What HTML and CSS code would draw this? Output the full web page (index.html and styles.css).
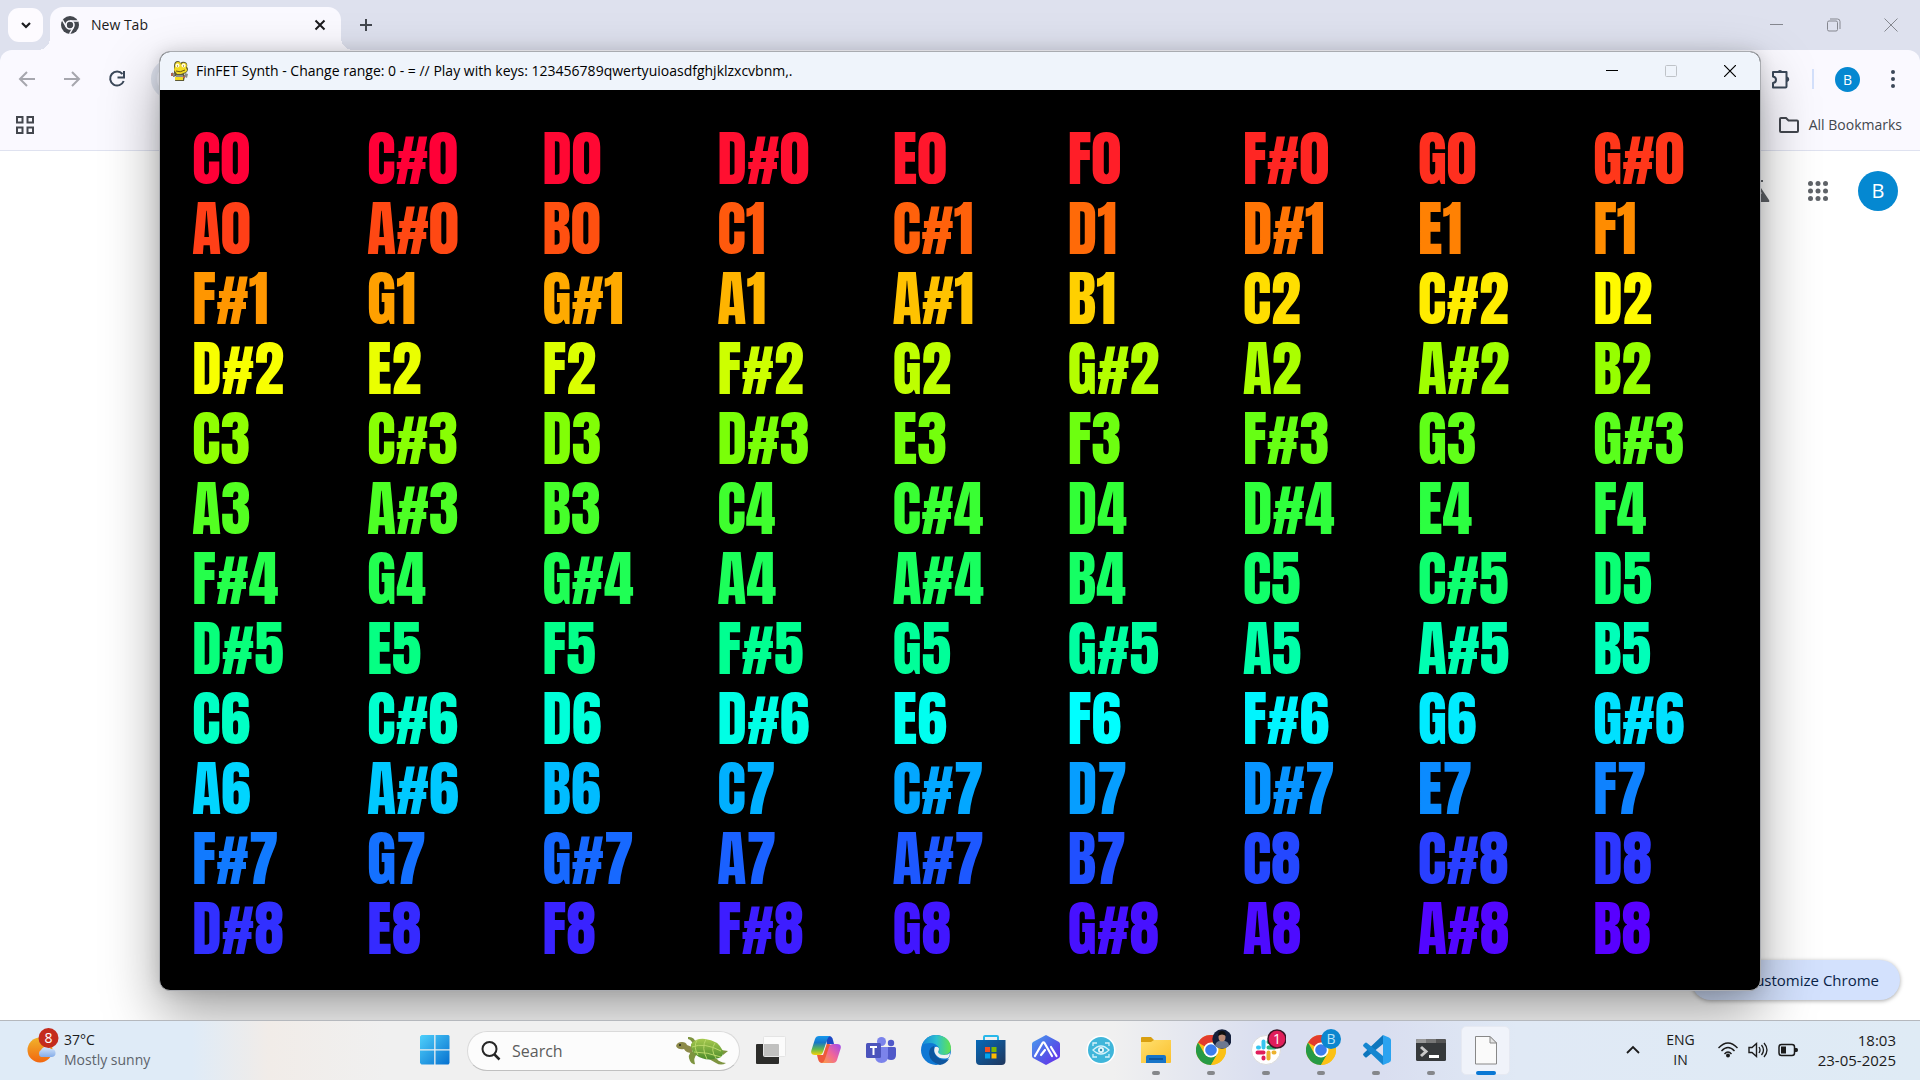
FILE: index.html
```html
<!DOCTYPE html>
<html lang="en">
<head>
<meta charset="utf-8">
<title>FinFET Synth</title>
<link rel="stylesheet" href="styles.css">
</head>
<body>
<svg class="defs" aria-hidden="true">
  <defs>
    <linearGradient id="winBlue" x1="0" y1="0" x2="1" y2="1"><stop offset="0" stop-color="#4fd0fb"/><stop offset="1" stop-color="#0670cf"/></linearGradient>
    <linearGradient id="sun" x1="0" y1="0" x2="0" y2="1"><stop offset="0" stop-color="#f0b42c"/><stop offset="1" stop-color="#f2660f"/></linearGradient>
    <linearGradient id="cloud" x1="0" y1="0" x2="0" y2="1"><stop offset="0" stop-color="#d5e6fb"/><stop offset="1" stop-color="#86ade8"/></linearGradient>
    <linearGradient id="copLeft" x1="0" y1="0" x2="0" y2="1"><stop offset="0" stop-color="#1698ee"/><stop offset=".35" stop-color="#1676c8"/><stop offset=".7" stop-color="#63b94c"/><stop offset="1" stop-color="#f7d209"/></linearGradient>
    <linearGradient id="copRight" x1="1" y1="0" x2="0" y2="1"><stop offset="0" stop-color="#a04bee"/><stop offset=".5" stop-color="#f0659a"/><stop offset="1" stop-color="#fb9f45"/></linearGradient>
    <linearGradient id="edgeTop" x1="0" y1="0" x2="1" y2="0"><stop offset="0" stop-color="#1686d8"/><stop offset=".5" stop-color="#2cc0d0"/><stop offset="1" stop-color="#62e44c"/></linearGradient>
    <linearGradient id="store" x1="0" y1="0" x2="1" y2="1"><stop offset="0" stop-color="#0669b8"/><stop offset="1" stop-color="#20365c"/></linearGradient>
    <linearGradient id="hex" x1="0" y1="0" x2="1" y2="1"><stop offset="0" stop-color="#4aa0ee"/><stop offset=".5" stop-color="#5061e8"/><stop offset="1" stop-color="#6a28ea"/></linearGradient>
    <linearGradient id="folder" x1="0" y1="0" x2="1" y2="1"><stop offset="0" stop-color="#ffdf6e"/><stop offset="1" stop-color="#fbc02d"/></linearGradient>
    <linearGradient id="shell" x1="0" y1="0" x2="0" y2="1"><stop offset="0" stop-color="#a6c94e"/><stop offset="1" stop-color="#4d8c2c"/></linearGradient>
    <symbol id="chrome" viewBox="0 0 30 30">
      <circle cx="15" cy="15" r="15" fill="#fbc116"/>
      <path d="M15 15 L2 7.500 A15 15 0 0 1 28 7.500 L15 7.500Z" fill="#e33b2e"/>
      <path d="M2 7.500 A15 15 0 0 0 15 30 L21.500 18.750 L15 15 L8.500 18.750Z" fill="#269a45"/>
      <path d="M28 7.500 A15 15 0 0 1 15 30 L21.500 18.750 L15 7.500Z" fill="#fbc116"/>
      <circle cx="15" cy="15" r="7.500" fill="#fff"/><circle cx="15" cy="15" r="5.800" fill="#3b7ded"/>
    </symbol>
  </defs>
</svg>

<main class="browser">
  <header class="tabstrip">
    <button class="tab-search" aria-label="Search tabs"><svg width="14" height="14" viewBox="0 0 14 14"><path d="M3 5l4 4 4-4" fill="none" stroke="#1b1b1f" stroke-width="2.200"/></svg></button>
    <div class="tab">
      <svg width="18" height="18" viewBox="0 0 18 18"><circle cx="9" cy="9" r="9" fill="#43474e"/><circle cx="9" cy="9" r="4" fill="none" stroke="#faf9ff" stroke-width="1.600"/><path d="M9 5H17M5.500 11L1.500 4.200M12.500 11L8.600 17.800" stroke="#faf9ff" stroke-width="1.500"/></svg>
      <span class="tab-title">New Tab</span>
      <button class="plain" aria-label="Close tab"><svg width="14" height="14" viewBox="0 0 14 14"><path d="M2.500 2.500l9 9M11.500 2.500l-9 9" stroke="#1b1b1f" stroke-width="2"/></svg></button>
    </div>
    <button class="plain new-tab" aria-label="New tab"><svg width="14" height="14" viewBox="0 0 14 14"><path d="M7 1v12M1 7h12" stroke="#43474e" stroke-width="2"/></svg></button>
    <div class="win-controls dim">
      <button class="plain" aria-label="Minimize"><svg width="14" height="14" viewBox="0 0 14 14"><path d="M0 6.500h13" stroke="currentColor"/></svg></button>
      <button class="plain" aria-label="Restore"><svg width="14" height="14" viewBox="0 0 14 14"><rect x=".5" y="3" width="10" height="10" rx="1.500" fill="none" stroke="currentColor"/><path d="M3 1h7.500q2.500 0 2.500 2.500V11" fill="none" stroke="currentColor"/></svg></button>
      <button class="plain" aria-label="Close"><svg width="14" height="14" viewBox="0 0 14 14"><path d="M.5.5l13 13M13.500.5l-13 13" stroke="currentColor"/></svg></button>
    </div>
  </header>

  <nav class="toolbar">
    <button class="plain nav-btn" aria-label="Back"><svg width="18" height="18" viewBox="0 0 18 18"><path d="M17 9H2.500M9 2L2 9l7 7" fill="none" stroke="#a6a7ae" stroke-width="2"/></svg></button>
    <button class="plain nav-btn" aria-label="Forward"><svg width="18" height="18" viewBox="0 0 18 18"><path d="M1 9h14.500M9 2l7 7-7 7" fill="none" stroke="#a6a7ae" stroke-width="2"/></svg></button>
    <button class="plain nav-btn" aria-label="Reload"><svg width="18" height="18" viewBox="0 0 18 18"><path d="M14.500 4A7 7 0 1 0 15.700 11" fill="none" stroke="#3b4859" stroke-width="2"/><path d="M16 1v6.500h-6.500" fill="none" stroke="#3b4859" stroke-width="2"/></svg></button>
    <input class="omnibox" type="text" aria-label="Address and search bar">
    <button class="plain" aria-label="Extensions"><svg width="22" height="22" viewBox="0 0 22 22"><path d="M3 4h13.500v14.500q0 1-1 1H3v-4.500q3-.5 3-3.300T3 8.400V4z" fill="none" stroke="#3b4859" stroke-width="2" stroke-linejoin="round"/><path d="M7.500 4a2.600 2.600 0 0 1 5 0zM17 8.500a2.800 2.800 0 0 1 0 5.500z" fill="#3b4859"/></svg></button>
    <span class="divider"></span>
    <button class="avatar small" aria-label="Profile">B</button>
    <button class="plain" aria-label="Menu"><svg width="6" height="18" viewBox="0 0 6 18"><g fill="#3b4859"><circle cx="3" cy="2" r="2"/><circle cx="3" cy="9" r="2"/><circle cx="3" cy="16" r="2"/></g></svg></button>
  </nav>

  <div class="bookmarks">
    <button class="plain" aria-label="Tab groups"><svg width="18" height="18" viewBox="0 0 18 18"><g fill="none" stroke="#43474e" stroke-width="2"><rect x="1" y="1" width="5.500" height="5.500"/><rect x="11.500" y="1" width="5.500" height="5.500"/><rect x="1" y="11.500" width="5.500" height="5.500"/><rect x="11.500" y="11.500" width="5.500" height="5.500"/></g></svg></button>
    <a class="all-bookmarks" href="#"><svg width="20" height="16" viewBox="0 0 20 16"><path d="M1 14V2q0-1 1-1h5l2.500 2.500H18q1 0 1 1V14q0 1-1 1H2q-1 0-1-1z" fill="none" stroke="#43474e" stroke-width="2"/></svg>All Bookmarks</a>
  </div>

  <section class="page">
    <div class="page-nav">
      <a href="#" aria-label="Labs"><svg width="24" height="24" viewBox="0 0 24 24"><path d="M7 1h10v2h-2v6l8 12q1 2-1 2H2q-2 0-1-2l8-12V3H7z" fill="#5f6368"/><path d="M11 3h2v7l3 4.500H8L11 10z" fill="#fff"/></svg></a>
      <a href="#" aria-label="Google apps" class="apps"><svg width="20" height="20" viewBox="0 0 20 20"><g fill="#5f6368"><circle cx="2.500" cy="2.500" r="2.500"/><circle cx="10" cy="2.500" r="2.500"/><circle cx="17.500" cy="2.500" r="2.500"/><circle cx="2.500" cy="10" r="2.500"/><circle cx="10" cy="10" r="2.500"/><circle cx="17.500" cy="10" r="2.500"/><circle cx="2.500" cy="17.500" r="2.500"/><circle cx="10" cy="17.500" r="2.500"/><circle cx="17.500" cy="17.500" r="2.500"/></g></svg></a>
      <button class="avatar" aria-label="Google account">B</button>
    </div>
    <button class="customize"><svg width="16" height="16" viewBox="0 0 16 16"><path d="M2 14l1-4 8-8 3 3-8 8z" fill="none" stroke="#0a2f66" stroke-width="2"/></svg>Customize Chrome</button>
  </section>
</main>

<section class="app-window" aria-label="FinFET Synth">
  <header class="titlebar">
    <svg width="18" height="20" viewBox="0 0 18 20">
      <path d="M3 5q0-5 4-5 2 0 2.500 2Q11 0 14 1q3 1 2 5 2 2 0 5l-3 2 1 2-1 5H4l1-5-3 1 1-4z" fill="#5d5a33"/>
      <path d="M4 5q0-4 3-4t3 3q1-3 4-2t1 5q2 2 0 4l-5 2H6L3 9zM4 16h8v3H4z" fill="#f2da22"/>
      <circle cx="6.500" cy="4.500" r="2" fill="#fffbe0"/><circle cx="12.500" cy="4.500" r="2" fill="#fffbe0"/><path d="M6 5h1M12 5h1M5 10q4 2 9-1" stroke="#6b5710" fill="none"/>
      <path d="M5 14h7v2H5zM1 11l3 2-1 3zM14 12l3 1-1 4-2-1z" fill="#8c8c88"/><path d="M0 12h2v3H0zM12 15h2v2h-2z" fill="#b06050"/>
    </svg>
    <h1>FinFET Synth - Change range: 0 - = // Play with keys: 123456789qwertyuioasdfghjklzxcvbnm,.</h1>
    <div class="win-controls">
      <button class="plain" aria-label="Minimize"><svg width="12" height="14" viewBox="0 0 12 14"><path d="M0 6.500h12" stroke="#000"/></svg></button>
      <button class="plain" aria-label="Maximize" disabled><svg width="12" height="12" viewBox="0 0 12 12"><rect x=".5" y=".5" width="11" height="11" rx="1" fill="none" stroke="#bfc3c8"/></svg></button>
      <button class="plain" aria-label="Close"><svg width="12" height="12" viewBox="0 0 12 12"><path d="M0 0l12 12M12 0L0 12" stroke="#000" stroke-width="1.200"/></svg></button>
    </div>
  </header>
  <ol class="notes" id="notes"></ol>
</section>

<footer class="taskbar">
  <div class="weather">
    <svg width="32" height="36" viewBox="0 0 32 36"><circle cx="13" cy="22" r="12.500" fill="url(#sun)"/><path d="M14 29a4 4 0 0 1 0-7 6 6 0 0 1 10-1 4 4 0 0 1 1 8z" fill="url(#cloud)"/><circle cx="21.500" cy="10" r="10" fill="#c42b1c"/><text x="21.500" y="15" text-anchor="middle" class="badge-text">8</text></svg>
    <div class="weather-text"><span>37°C</span><span class="muted">Mostly sunny</span></div>
  </div>

  <div class="dock">
    <button class="item" aria-label="Start"><svg width="30" height="30" viewBox="0 0 30 30"><path d="M1.500 0H14.200V14.200H0V1.500zM15.500 0H28.500L29.500 1V14.200H15.500zM0 15.500H14.200V29.500H1.500L0 28zM15.500 15.500H29.500V28L28.500 29.500H15.500z" fill="url(#winBlue)"/></svg></button>
    <label class="search">
      <svg width="20" height="20" viewBox="0 0 20 20"><circle cx="8.500" cy="8" r="7" fill="none" stroke="#262626" stroke-width="2"/><path d="M13.500 13.500L18.500 18.500" stroke="#262626" stroke-width="2.500"/></svg>
      <input type="text" placeholder="Search" aria-label="Search">
      <svg width="54" height="30" viewBox="0 0 54 30">
        <path d="M1 10q1-4 6-4 4 0 5 3l5 2v6q-6 0-8-4-6 1-8-3z" fill="#8d8a4a"/><path d="M13 1q6-1 8 6l-3 2q-1-5-5-6zM17 15l5 3q-4 4-2 10-3 1-5-3-3-6 2-10zM34 22l8 1q2 3 9 4-5 3-10 0l-7-4zM46 14l7 1-5 4z" fill="#7e9440"/>
        <path d="M16 8q5-6 14-5 13 1 18 12 1 5-4 7-14 4-23-3-6-5-5-11z" fill="url(#shell)"/>
        <path d="M22 4q-4 7 1 15M31 3q-5 9 1 20M40 7q-5 7 1 15M17 11q12-5 29 4M19 16q13 0 27 5" fill="none" stroke="#b9d76a"/><circle cx="5" cy="9" r="1" fill="#222"/>
      </svg>
    </label>
    <button class="item" aria-label="Task view"><svg width="30" height="30" viewBox="0 0 30 30"><rect x="0" y="9" width="23" height="20" rx="1" fill="#2c2c2a"/><rect x="7.500" y="1.500" width="22" height="20" rx="1" fill="#fff" fill-opacity=".7" stroke="#e4e4e4"/></svg></button>
    <button class="item" aria-label="Copilot"><svg width="30" height="30" viewBox="0 0 30 30"><path d="M11 28q-3 0-4-4l-1-4h6l4-12 6 3-5 13q-1 4-6 4z" fill="#ee5a3a"/><path d="M14 1h4q3 0 4 4l1 4h-7z" fill="#1c48c4"/><path d="M8 1h11q-2 1-3 4l-4 12q-1 3-4 3H4q-5 0-3.500-5L4 4q1-3 4-3z" fill="url(#copLeft)"/><path d="M22 28H11q2-1 3-4l4-12q1-3 4-3h4q5 0 3.500 5L26 25q-1 3-4 3z" fill="url(#copRight)"/></svg></button>
    <button class="item" aria-label="Teams"><svg width="30" height="30" viewBox="0 0 30 30"><circle cx="15.500" cy="6.500" r="4.500" fill="#7b83eb"/><circle cx="25" cy="8" r="3.200" fill="#5059c9"/><path d="M20 12h8.500q1.500 0 1.500 1.500V20q0 5-5 5-4 0-5-3z" fill="#5059c9"/><path d="M9 12h13v9q0 7-6.500 7T9 21z" fill="#7b83eb"/><rect x="0" y="8" width="15" height="15" rx="1.500" fill="#4b53bc"/><path d="M4 12h7M7.500 12v8" stroke="#fff" stroke-width="2"/></svg></button>
    <button class="item" aria-label="Edge"><svg width="30" height="30" viewBox="0 0 30 30"><circle cx="15" cy="15" r="15" fill="#0f78d4"/><path d="M1 10Q5 0 15 0q14 1 15 13 0 7-8 7-5 0-5-3 2-2 1-4-3-5-9-5-5 0-8 2z" fill="url(#edgeTop)"/><path d="M13 11q-5 1-5 8 1 8 11 11 6-1 9-6-5 2-9 0-7-3-6-13z" fill="#0e569f"/><path d="M14 12q3-1 4 1.500 0 2-1 3.500 1 3 6 3 4 0 6-2 0 3-2 5-8 2-12-3-3-4-1-8z" fill="#f0f0f0"/></svg></button>
    <button class="item" aria-label="Store"><svg width="30" height="30" viewBox="0 0 30 30"><path d="M8 7V2q0-1 1-1h12q1 0 1 1v5" fill="none" stroke="#28b8ea" stroke-width="2"/><path d="M0 5h29.500v21q0 4-4 4H4q-4 0-4-4z" fill="url(#store)"/><path d="M9 12h5v5H9z" fill="#f25022"/><path d="M15.500 12h5v5h-5z" fill="#7fba00"/><path d="M9 18.500h5v5H9z" fill="#00a4ef"/><path d="M15.500 18.500h5v5h-5z" fill="#ffb900"/></svg></button>
    <button class="item" aria-label="Assistant"><svg width="30" height="30" viewBox="0 0 30 30"><path d="M15 0l13 7q1 1 1 2v12q0 1-1 2l-13 7-13-7q-1-1-1-2V9q0-1 1-2z" fill="url(#hex)"/><path d="M4 21l7.500-13q1-1.500 2 0L21 21M10 20l4-5M20 12l5.500 9" fill="none" stroke="#fff" stroke-width="2.200" stroke-linecap="round"/></svg></button>
    <button class="item" aria-label="Eye care"><svg width="30" height="30" viewBox="0 0 30 30"><circle cx="15" cy="15" r="14.500" fill="#fff"/><circle cx="15" cy="15" r="13" fill="#3fb6da"/><path d="M7 15q8-8 16 0-8 8-16 0zM7 11V8h4M19 8h4v3M7 19v3h4M19 22h4v-3" fill="none" stroke="#d5f2fa" stroke-width="1.300"/><circle cx="15" cy="15" r="3" fill="#e8f8fc"/><circle cx="15" cy="15" r="1.200" fill="#3a8cab"/></svg></button>
    <button class="item running" aria-label="File Explorer"><svg width="30" height="30" viewBox="0 0 30 30"><path d="M0 3q0-1 1-1h9l3 3v5H0z" fill="#d99f10"/><path d="M0 7h10l3-2h17v22q0 1-1 1H0z" fill="url(#folder)"/><path d="M5 28v-6q0-2 2-2h16q2 0 2 2v6z" fill="#1774c8"/><path d="M8 24h14" stroke="#0b4c90" stroke-width="1.500"/></svg></button>
    <button class="item running" aria-label="Chrome, personal"><svg width="40" height="36" viewBox="0 0 40 36"><use href="#chrome" x="5" y="6" width="30" height="30"/><circle cx="31" cy="10" r="9.700" fill="#15203c"/><path d="M24 17q1-5 5-5h5q4 1 4 5-7 5-14 0z" fill="#6d7890"/><ellipse cx="31" cy="8" rx="3.500" ry="4.500" fill="#b98a76"/><path d="M27 7q0-5 4-5t4 5q-4-3-8 0z" fill="#111"/></svg></button>
    <button class="item running" aria-label="Slack"><svg width="40" height="36" viewBox="0 0 40 36"><circle cx="20" cy="21" r="14.500" fill="#fff" stroke="#dcdcdc"/><g fill="none" stroke-width="4" stroke-linecap="round"><path d="M17.500 12.500v6M12 18.500h1" stroke="#36c5f0"/><path d="M22.500 18.500h6M22.500 13v0" stroke="#2eb67d"/><path d="M22.500 23.500v6M27.500 23.500h1" stroke="#ecb22e"/><path d="M11.500 23.500h6M17.500 28.500v1" stroke="#e01e5a"/></g><circle cx="31" cy="10" r="9" fill="#e01e5a" stroke="#3f1626" stroke-width="1.500"/><text x="31" y="15" text-anchor="middle" class="badge-text">1</text></svg></button>
    <button class="item running" aria-label="Chrome, work"><svg width="40" height="36" viewBox="0 0 40 36"><use href="#chrome" x="5" y="6" width="30" height="30"/><circle cx="30" cy="10" r="10" fill="#0b86cf"/><text x="30" y="15" text-anchor="middle" class="badge-text light">B</text></svg></button>
    <button class="item running" aria-label="Visual Studio Code"><svg width="30" height="30" viewBox="0 0 30 30"><path d="M22 0L2.500 18.500q-1 1 0 2l1.500 1.500q1 1 2 0L22 9z" fill="#0d76bd"/><path d="M22 30L2.500 11.500q-1-1 0-2L4 8q1-1 2 0L22 21z" fill="#1586d0"/><path d="M22 0l6 2.500q2 1 2 2.500v20q0 1.500-2 2.500L22 30z" fill="#2ba3f0"/></svg></button>
    <button class="item running" aria-label="Terminal"><svg width="30" height="30" viewBox="0 0 30 30"><rect x="0" y="4" width="30" height="22" rx="1.500" fill="#36393b"/><path d="M0 8V5.500Q0 4 1.500 4H10v4z" fill="#999"/><path d="M10 4h10v4H10z" fill="#777"/><path d="M20 4h8.500Q30 4 30 5.500V8H20z" fill="#555"/><path d="M5 12l5 4.500L5 21" fill="none" stroke="#c9c9c9" stroke-width="3"/><path d="M13 21.500h10" stroke="#fff" stroke-width="3"/></svg></button>
    <button class="item active" aria-label="FinFET Synth"><svg width="24" height="30" viewBox="0 0 24 30"><path d="M1.500 1.500h14.500l6.500 6.500v21H1.500z" fill="#fafafa" stroke="#888"/><path d="M16 1.500V8h6.500z" fill="#e4e4e4" stroke="#888"/></svg></button>
  </div>

  <div class="tray">
    <button class="plain" aria-label="Show hidden icons"><svg width="14" height="10" viewBox="0 0 14 10"><path d="M1 8l6-6 6 6" fill="none" stroke="#1b1b1b" stroke-width="1.800"/></svg></button>
    <span class="lang">ENG<br>IN</span>
    <div class="status">
      <svg width="20" height="16" viewBox="0 0 20 16"><g fill="none" stroke="#1b1b1b" stroke-width="1.400"><path d="M.5 6q9.500-10 19 0M3.500 9q6.500-7 13 0M6.500 12q3.500-4 7 0"/></g><circle cx="10" cy="13.500" r="2" fill="#1b1b1b"/></svg>
      <svg width="20" height="18" viewBox="0 0 20 18"><path d="M1 6.500h3l4.500-4v13l-4.500-4H1z" fill="none" stroke="#1b1b1b" stroke-width="1.400"/><path d="M11 6q2 3 0 6M13.500 4q4 5 0 10M16 2q6 7 0 14" fill="none" stroke="#1b1b1b" stroke-width="1.300"/></svg>
      <svg width="20" height="14" viewBox="0 0 20 14"><rect x="1" y="1.500" width="15.500" height="11" rx="2.500" fill="none" stroke="#1b1b1b" stroke-width="1.500"/><rect x="3" y="3.500" width="5" height="7" fill="#1b1b1b"/><path d="M17 5h1.500q1.500 0 1.500 2t-1.500 2H17z" fill="#1b1b1b"/></svg>
    </div>
    <time class="clock" datetime="2025-05-23T18:03">18:03<br>23-05-2025</time>
  </div>
</footer>
<script src="notes.js"></script>
</body>
</html>
```
FILE: styles.css
```css
* { box-sizing: border-box; }

body {
  margin: 0;
  min-height: 100vh;
  display: flex;
  flex-direction: column;
  position: relative;
  overflow: hidden;
  background: #fff;
  color: #1b1b1b;
  font: 14px/20px "Open Sans", "Noto Sans", sans-serif;
}

button, input { font: inherit; color: inherit; border: 0; }
a { color: inherit; text-decoration: none; }
svg { display: block; flex: none; }
.defs { position: absolute; width: 0; height: 0; }
.plain { display: grid; place-items: center; padding: 0; background: none; }

/* Browser */
.browser { flex: 1; display: flex; flex-direction: column; background: #dee1ee; }

.tabstrip { height: 50px; display: flex; align-items: center; padding: 0 22px 0 8px; }
.tab-search {
  width: 35px; height: 34px; padding: 0;
  display: grid; place-items: center;
  border-radius: 11px; background: #fdfbff;
}
.tab {
  position: relative;
  align-self: flex-end;
  width: 291px; height: 43px;
  margin-left: 7px;
  padding: 0 14px 7px 11px;
  display: flex; align-items: center; gap: 12px;
  border-radius: 13px 13px 0 0;
  background: #faf9ff;
}
.tab::before, .tab::after {
  content: "";
  position: absolute;
  bottom: 0;
  width: 12px; height: 12px;
}
.tab::before { right: 100%; background: radial-gradient(circle at 0 0, transparent 12px, #faf9ff 12px); }
.tab::after { left: 100%; background: radial-gradient(circle at 100% 0, transparent 12px, #faf9ff 12px); }
.tab-title { flex: 1; }
.new-tab { margin-left: 18px; }

.win-controls { margin-left: auto; display: flex; align-items: center; gap: 43px; }
.dim { color: #85878f; }

.toolbar {
  height: 58px;
  display: flex; align-items: center;
  padding: 0 24px 0 18px;
  border-radius: 12px 12px 0 0;
  background: #faf9ff;
}
.nav-btn { margin-right: 27px; }
.omnibox {
  flex: 1; min-width: 0; height: 40px;
  margin: 0 31px 0 -2px;
  border: 6px solid #dfe3ef;
  border-radius: 20px;
  background: #edeffa;
}
.divider { width: 2px; height: 20px; margin: 0 21px 0 20px; background: #d3e0fb; }
.avatar {
  width: 40px; height: 40px; padding: 0;
  border-radius: 50%;
  background: #0588d1; color: #fff;
  font-size: 20px; line-height: 40px;
}
.avatar.small { width: 25px; height: 25px; margin-right: 30px; font-size: 14px; line-height: 25px; }

.bookmarks {
  height: 43px;
  display: flex; align-items: center; justify-content: space-between;
  padding: 0 18px 8px 16px;
  border-bottom: 1px solid #dfe2f0;
  background: #faf9ff;
}
.all-bookmarks { display: flex; align-items: center; gap: 10px; color: #43474e; }

.page {
  flex: 1;
  display: flex; flex-direction: column; justify-content: space-between; align-items: flex-end;
  padding: 20px 20px;
  background: #fff;
}
.page-nav { display: flex; align-items: center; padding-right: 2px; }
.apps { margin: 0 30px 0 38px; }
.customize {
  width: 209px; height: 40px; padding: 0 21px;
  display: flex; align-items: center; justify-content: flex-end; gap: 12px;
  border-radius: 20px;
  background: #d3e1fd; color: #0a2448;
  font-size: 15px;
  box-shadow: 0 1px 4px rgba(0, 0, 0, .35);
}

/* Synth window, floating over the browser */
.app-window {
  position: absolute;
  top: 51px; left: 159px; right: 159px;
  overflow: hidden;
  border: 1px solid #a9abb0;
  border-radius: 11px;
  background: #000;
  box-shadow: 0 0 16px rgba(0, 0, 0, .12), 0 24px 56px rgba(0, 0, 0, .36);
}
.titlebar {
  height: 38px;
  display: flex; align-items: center; gap: 7px;
  padding: 0 24px 0 11px;
  background: #eff4fb;
}
.titlebar h1 { margin: 0; font-size: 14px; font-weight: 400; color: #000; }
.titlebar .win-controls { gap: 47px; }

.notes {
  margin: 0;
  padding: 34px 24px 26px 32px;
  display: grid;
  grid-template-columns: repeat(9, 1fr);
  column-gap: 32px;
  list-style: none;
}
.notes li {
  height: 70px;
  white-space: nowrap;
  font: 400 60px/70px Impact, Anton, "Liberation Sans Narrow", "Liberation Sans", sans-serif;
}

/* Taskbar */
.taskbar {
  position: relative;
  height: 60px;
  display: grid;
  grid-template-columns: 1fr auto 1fr;
  align-items: center;
  border-top: 1px solid #b5b8bd;
  background: linear-gradient(90deg, #dfebf7 0, #dfebf7 10%, #f1ece8 14%, #f0f0f0 20%, #f0f0f0 58%, #d9def0 66%, #d9def0 72%, #e0e9f5 79%, #dfebf5 100%);
}
.weather { display: flex; align-items: center; gap: 5px; padding: 0 0 10px 27px; }
.weather-text { display: flex; flex-direction: column; padding-top: 8px; }
.muted { color: #5d636b; }
.badge-text { font-size: 14px; fill: #fff; }
.light { fill: #b9e2f7; }

.dock { display: flex; align-items: center; }
.item {
  position: relative;
  width: 55px; height: 59px; padding: 0 0 2px;
  display: grid; place-items: center;
  background: none;
}
.item svg[height="36"] { margin-bottom: 6px; }
.search {
  width: 273px; height: 40px;
  margin: 0 3px 0 5px; padding: 0 10px 0 13px;
  display: flex; align-items: center; gap: 11px;
  border: 1px solid #dadada; border-bottom-color: #c0c0c0;
  border-radius: 20px;
  background: #fcfcfc;
}
.search input { flex: 1; min-width: 0; padding: 0; background: none; font-size: 16px; outline: 0; }
.search input::placeholder { color: #5c5c5c; opacity: 1; }
.running::after, .active::after {
  content: "";
  position: absolute;
  bottom: 5px; left: 50%;
  width: 8px; height: 4px;
  margin-left: -4px;
  border-radius: 2px;
  background: #85878b;
}
.active::after { width: 20px; margin-left: -10px; background: #0a78d4; }
.active::before {
  content: "";
  position: absolute;
  inset: 5px 3px;
  border: 1px solid #e6e9f2;
  border-radius: 5px;
  background: #f0f3fa;
}
.active svg { position: relative; }

.tray { display: flex; align-items: center; justify-content: flex-end; padding-right: 24px; padding-bottom: 2px; }
.lang { margin: 0 23px 0 26px; text-align: center; }
.status { display: flex; align-items: center; gap: 10px; margin-right: 20px; }
.clock { text-align: right; font-size: 15px; }
```
FILE: notes.js
```js
// Builds the note board: nine octaves of twelve semitones, tinted along a rainbow.
const names = ["C", "C#", "D", "D#", "E", "F", "F#", "G", "G#", "A", "A#", "B"];

// [note index, red, green, blue]
const stops = [
  [0, 255, 0, 55], [1, 255, 0, 55], [5, 255, 30, 40], [8, 255, 55, 26],
  [11, 255, 80, 16], [14, 255, 106, 8], [17, 255, 140, 0], [21, 255, 180, 0],
  [26, 255, 250, 0], [27, 248, 255, 0], [31, 190, 255, 0], [35, 150, 255, 0],
  [39, 122, 255, 8], [44, 90, 255, 28], [50, 50, 255, 55], [57, 28, 255, 90],
  [62, 10, 255, 116], [66, 0, 255, 145], [71, 0, 255, 185], [76, 0, 255, 240],
  [77, 0, 255, 255], [80, 0, 225, 255], [84, 0, 176, 255], [89, 14, 130, 255],
  [95, 32, 80, 255], [98, 45, 55, 255], [103, 65, 22, 255], [107, 88, 0, 255]
];

function tint(i) {
  const k = Math.max(1, stops.findIndex(s => s[0] >= i));
  const a = stops[k - 1], b = stops[k];
  const t = (i - a[0]) / (b[0] - a[0]);
  const rgb = [1, 2, 3].map(c => Math.round(a[c] + (b[c] - a[c]) * t));
  return `rgb(${rgb.join(",")})`;
}

const board = document.getElementById("notes");
for (let i = 0; i < 108; i++) {
  const note = document.createElement("li");
  note.textContent = names[i % 12] + Math.floor(i / 12);
  note.style.color = tint(i);
  board.append(note);
}
```
